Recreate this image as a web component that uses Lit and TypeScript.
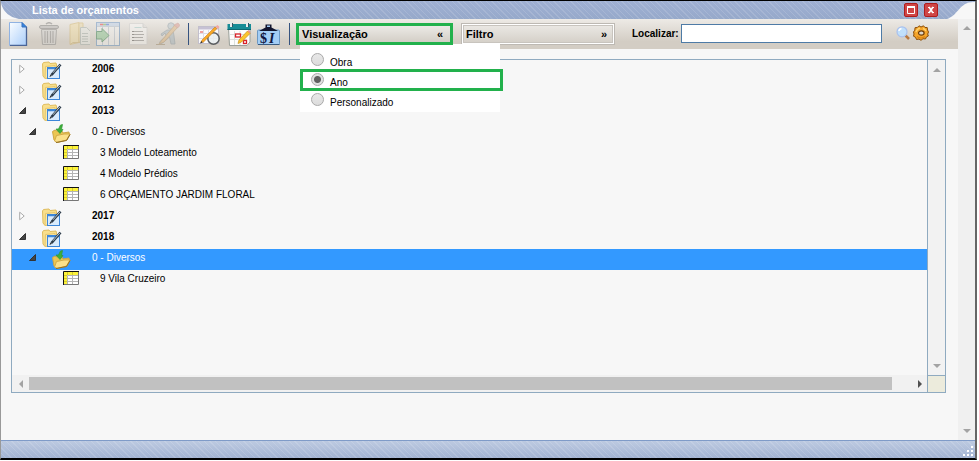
import { LitElement, html, svg, css, nothing, TemplateResult } from "lit";
import { customElement, state } from "lit/decorators.js";
import { classMap } from "lit/directives/class-map.js";

interface TreeRow {
  level: 0 | 1 | 2;
  label: string;
  open?: boolean;
  selected?: boolean;
}

const ROWS: TreeRow[] = [
  { level: 0, label: "2006", open: false },
  { level: 0, label: "2012", open: false },
  { level: 0, label: "2013", open: true },
  { level: 1, label: "0 - Diversos", open: true },
  { level: 2, label: "3 Modelo Loteamento" },
  { level: 2, label: "4 Modelo Prédios" },
  { level: 2, label: "6 ORÇAMENTO JARDIM FLORAL" },
  { level: 0, label: "2017", open: false },
  { level: 0, label: "2018", open: true },
  { level: 1, label: "0 - Diversos", open: true, selected: true },
  { level: 2, label: "9 Vila Cruzeiro" },
];

const icon = (w: number, h: number, body: unknown) =>
  html`<svg width=${w} height=${h} viewBox="0 0 ${w} ${h}" aria-hidden="true">${body}</svg>`;

const newPage = icon(24, 24, svg`
  <defs><linearGradient id="np" x1="0" y1="0" x2="1" y2="1">
    <stop offset="0" stop-color="#fafdff"/><stop offset="1" stop-color="#a9cdfa"/></linearGradient></defs>
  <path d="M3.500.5H16l4.500 4.500V23.500H3.500Z" fill="url(#np)" stroke="#8fb2e2"/>
  <path d="M4 23.500H20.500V5" fill="none" stroke="#4a6496" stroke-width="1.300"/>
  <path d="M16 .5V5h4.500Z" fill="#2f86e8" stroke="#3a70b8"/>`);

const trash = icon(24, 24, svg`
  <path d="M10 2q3-2.500 6 0" fill="none" stroke="#666" stroke-width="1.500"/>
  <rect x="3.500" y="3.500" width="19" height="3" rx="1.500" fill="#aaa" stroke="#666"/>
  <path d="M5.500 7.500H20.500L19.500 22.500H6.500Z" fill="#d0d0d0" stroke="#777"/>
  <path d="M9 9v12M11.500 9v12M14.500 9v12M17 9v12" stroke="#777" stroke-width="1.200"/>`);

const copyFolder = icon(24, 24, svg`
  <path d="M4 2.500 13 .5V20.500L4 22.500Z" fill="#f4dc98" stroke="#d0ae58"/>
  <path d="M13 1h4v19h-4Z" fill="#eedaa0" stroke="#d0ae58"/>
  <path d="M14.500 5.500h6l4 4v13h-10Z" fill="#e8ece6" stroke="#98a6a0"/>
  <path d="M16 11.500h6M16 14.500h6M16 17h6M16 19.500h6" stroke="#98a6a0"/>
  <path d="m4 22.500 3-2h7" fill="none" stroke="#c8a550"/>`);

const importWindow = icon(24, 24, svg`
  <rect x=".5" y=".5" width="23" height="23" fill="#f8f8f8" stroke="#4a80bc"/>
  <path d="M1 1h22v3H1Z" fill="#b4cdee"/>
  <path d="M4 2.500h3" stroke="#e11" stroke-width="1.500"/><path d="M7 2.500h3" stroke="#6a3" stroke-width="1.500"/>
  <path d="M10 2.500h3" stroke="#25c" stroke-width="1.500"/>
  <path d="M1 4.500h22M6.500 5v18M12.500 5v18M18.500 5v18" stroke="#a9b9cb" fill="none"/>
  <path d="M.5 9.500H6V6.500L13 13.500 6 20V17H.5Z" fill="#7cc487" stroke="#146a30"/>`);

const listPage = icon(24, 24, svg`
  <path d="M3.500 1.500H17l4 4V22.500H3.500Z" fill="#fff" stroke="#ccc"/>
  <path d="M17 1.500v4h4" fill="#ddd" stroke="#bbb"/>
  <path d="M6 9.500h2M6 12.500h2M6 15.500h2M6 18.500h2" stroke="#333"/>
  <path d="M8.500 5.500h7" stroke="#9cc"/>
  <path d="M8 9.500h9M8 12.500h10M8 15.500h9M8 18.500h10" stroke="#777"/>`);

const worker = icon(24, 24, svg`
  <circle cx="15" cy="4" r="3.200" fill="#b0c2cc" stroke="#7f929e"/>
  <path d="M11 8h6l1 6 1 8h-4l-1.500-7L9 19l-4 3-1.500-2L10 14l-1-3-3 3-1-2Z" fill="#9db0bb" stroke="#70838f" stroke-width=".8"/>
  <path d="m3 22 3-4L19 3l3 2L8 20Z" fill="#e0b070" stroke="#a88048" stroke-width=".8"/>
  <path d="m18 3 4-2 2 2.500-2.500 2.500Z" fill="#dc8c80" stroke="#b0685c" stroke-width=".6"/>
  <path d="M0 22.500h9" stroke="#8f7a58"/>`);

const calendarClock = icon(24, 24, svg`
  <rect x="1.500" y="4.500" width="20" height="17" fill="#fbfbfd" stroke="#c2bfcc"/>
  <path d="M2 5h19v2.500H2Z" fill="#c6c1d4"/>
  <path d="M2 11.500h19M2 16.500h19M6.500 8v13M11.500 8v13M16.500 8v13" stroke="#dedce6"/>
  <path d="M3 9h3v2H3Z" fill="#f0a0a0"/>
  <circle cx="16.500" cy="16.500" r="5.700" fill="#e9edee" fill-opacity=".85" stroke="#5a5d5f" stroke-width="1.500"/>
  <path d="m4 20.500 1-2.500L18 5l1.800 1.800L6.500 20Z" fill="#f9a824" stroke="#c47e20" stroke-width=".6"/>
  <path d="m18.500 4.500 2-1.500 2 2-1.500 2Z" fill="#f4a8a0"/><path d="m3 21.500 1.300-2.500 1.400 1.400Z" fill="#333"/>`);

const calendarEdit = icon(24, 24, svg`
  <path d="M1.500 6 2.500 23.500H20L23 20V6Z" fill="#fdfdfd" stroke="#9aa09a"/>
  <path d="M.5 2h23.500v6H.5Z" fill="#178c96"/><path d="M.5 7.500H24" stroke="#0e6871"/>
  <path d="M4 0v5M20 0v5" stroke="#e8eeee" stroke-width="2"/><path d="M5.500 1v4M21.500 1v4" stroke="#356"/>
  <path d="M3 12.500h18M3 17.500h17M7.500 9v14M13 9v14" stroke="#dbe0dc"/>
  <rect x="8.500" y="12" width="5" height="3" fill="#fff" stroke="#d8232a" stroke-width="1.300"/>
  <rect x="16.500" y="18.500" width="3" height="3" fill="#fff" stroke="#d8232a" stroke-width="1.300"/>
  <path d="m11 21.500 1-3.500L20.500 9l2.500 2.500-8.500 8.500Z" fill="#fcc52c" stroke="#c98f18" stroke-width=".7"/>
  <path d="m20.500 9 1-1 2 2-.5 1.500Z" fill="#ef8d86"/>`);

const priceBox = icon(24, 24, svg`
  <rect x=".5" y="8" width="22" height="14.500" rx="1" fill="#a3cdf5" stroke="#6c98c4"/>
  <path d="M1 22.500h21.500" stroke="#385a80"/>
  <path d="M8.500 5.500V2.500h6V5.500L21 9H2Z" fill="#12152e"/><rect x="10" y="3.500" width="3" height="1.500" fill="#a3cdf5"/>
  <text class="price" x="3" y="21">$</text><text class="price slant" x="12" y="21">I</text>`);

const maximize = icon(14, 14, svg`
  <rect x=".5" y=".5" width="13" height="13" rx="1.500" fill="#cf4646" stroke="#b01c1c"/>
  <path d="M3 3.500h8M3.500 5v5.500h7V5" fill="none" stroke="#fff"/><path d="M3 4.500h8" stroke="#fff"/>`);

const close = icon(14, 14, svg`
  <rect x=".5" y=".5" width="13" height="13" rx="1.500" fill="#cf4646" stroke="#b01c1c"/>
  <path d="m5 4 4 6M9 4l-4 6" stroke="#fff" stroke-width="1.600"/><path d="M4 4.500h2M8 4.500h2M4 9.500h2M8 9.500h2" stroke="#fff"/>`);

const search = icon(14, 14, svg`
  <path d="m9.500 9.500 3.500 3.500" stroke="#b9793e" stroke-width="2.500"/>
  <circle cx="6" cy="5.800" r="5" fill="#c1e0fb" stroke="#a9c1ee" stroke-width="1.200"/>
  <path d="M3 5q0-2 2.500-2.500" fill="none" stroke="#fff" stroke-width="1.500"/>`);

const gear = icon(16, 16, svg`
  <path d="M6 .8 8 2l2.500-1.200L12 2.500h2.200l.3 2.500L15.500 7l-.8 2 .6 2-2 1-.8 2-2.500-.3L8 15.300l-2-1.200-2.500.4-1-2.300-2-1L1 9 .5 7l1.300-1.800.2-2.500L4.300 2.500Z"
    fill="#f5a52a" stroke="#8a4e0c"/>
  <path d="M3 7q.8-3 4-3.800M10 3.500q2 .5 3 2.500" fill="none" stroke="#ffd36e" stroke-width="1.300"/>
  <path d="M4 11.500q4 3 8 0" fill="none" stroke="#d98212" stroke-width="1.200"/>
  <ellipse cx="8.300" cy="8" rx="2.800" ry="2.200" fill="#ded6c8" stroke="#6e3c06" stroke-width="1.200"/>`);

const folderEdit = icon(20, 18, svg`
  <path d="M.5 3 1.500 1.500 7 1l1 1.500 6-.5.500 2V16L3 17.500 1 15Z" fill="#f8df8c" stroke="#dfbd60"/>
  <path d="M3.500 5.500 13 4.500V15L3 17.500Z" fill="#fbe9a8" stroke="#e4c670"/>
  <rect x="5.500" y="6.500" width="12" height="11" fill="#d9ebfc" stroke="#3c86d8"/>
  <path d="M6 7.500h11" stroke="#3c86d8" stroke-width="1.500"/>
  <path d="M9.500 14 18.500 3.500" stroke="#2b3a48" stroke-width="2.600"/><path d="m11 11.800 7-8" stroke="#b4c4ce"/>
  <path d="m7.500 16 1-2.500 1.500 1.200Z" fill="#222"/>`);

const folderOpen = icon(20, 19, svg`
  <path d="M2 16 .5 7.500 3 6l2 1h5l1 2 6-1v2l1 0-3 6L5 18.500Z" fill="#ecc652" stroke="#cfa645"/>
  <path d="m2.500 17 2-5.500L12 10l6 0-3.500 6-9.500 2.500Z" fill="#fbe08a" stroke="#d2aa48"/>
  <path d="M4 18.500 14.500 16.500l3.500-6" fill="none" stroke="#8d6d28"/>
  <path d="M10.500.5 8.500 1 6.500 5H4l4 4.500L11 5.500H9.500Z" fill="#3fae3a" stroke="#2f9a34" stroke-width=".7"/>`);

const sheet = icon(17, 14, svg`
  <rect x="1.500" y=".5" width="15" height="13" fill="#fff"/>
  <path d="M2 1h14v3H2ZM2 1h3v12H2Z" fill="#fdf33a"/>
  <path d="M5.500 4.500H16M5.500 7.500H16M5.500 10.500H16M10.500 4.500V13M5.500 4.500V13" fill="none" stroke="#b4b4b4"/>
  <path d="M2 4.500h3M2 7.500h3M2 10.500h3M10.500 1v3M5.500 1v3" stroke="#d4ca30"/>
  <path d="M16.500 1v12.500H2" fill="none" stroke="#777"/>
  <path d="M1.500 14V.5H17" fill="none" stroke="#111"/>`);

const arrowClosed = icon(6, 10, svg`<path d="M.7 1.200v7.600L5.200 5Z" fill="#fff" stroke="#a9a9a9"/>`);
const arrowOpen = icon(7, 7, svg`<path d="M6.500.5v6H.5Z" fill="#444" stroke="#333" stroke-linejoin="round"/>`);

const triUp = icon(8, 4, svg`<path d="M0 4 4 0l4 4Z" fill="currentColor"/>`);
const triDown = icon(8, 4, svg`<path d="M0 0h8L4 4Z" fill="currentColor"/>`);
const triLeft = icon(4, 8, svg`<path d="M4 0v8L0 4Z" fill="currentColor"/>`);
const triRight = icon(4, 8, svg`<path d="M0 0v8l4-4Z" fill="currentColor"/>`);

const cornerLeft = icon(18, 18, svg`<path d="M0 2Q3 15 18 18H0Z" fill="#f7f7f7"/>`);
const cornerRight = icon(28, 18, svg`<path d="M0 18C12 14 12 1 27 1H28V18Z" fill="#f7f7f7"/>`);
const grip = icon(12, 12, svg`<path d="M8 0h2v2H8ZM4 4h2v2H4ZM8 4h2v2H8ZM0 8h2v2H0ZM4 8h2v2H4ZM8 8h2v2H8Z" fill="#fff"/>`);

const TOOLS_EDIT: { name: string; art: TemplateResult; off?: boolean }[] = [
  { name: "Novo", art: newPage },
  { name: "Excluir", art: trash, off: true },
  { name: "Copiar", art: copyFolder, off: true },
  { name: "Importar", art: importWindow, off: true },
  { name: "Detalhes", art: listPage, off: true },
  { name: "Recursos", art: worker, off: true },
];

const TOOLS_PLAN = [
  { name: "Cronograma", art: calendarClock },
  { name: "Planejamento", art: calendarEdit },
  { name: "Preços", art: priceBox },
];

@customElement("budget-tree")
export class BudgetTree extends LitElement {
  static styles = css`
    :host {
      display: grid;
      grid-template: minmax(0, 1fr) 17px / minmax(0, 1fr) 18px;
      border: 1px solid #8faac0;
      box-sizing: border-box;
      font: 10px/18px "Liberation Sans", Arial, sans-serif;
      color: #000;
    }
    svg { display: block; }
    .rows { margin: 0; padding: 0; list-style: none; overflow: hidden; }
    .row { display: grid; grid-template-columns: 80px 1fr; height: 21px; }
    .lead { display: grid; grid-template-columns: 20px 20px; column-gap: 10px; align-items: start; }
    .level1 .lead { padding-left: 10px; }
    .level2 .lead { padding-left: 20px; }
    .level0 { font-weight: bold; }
    .level2 { grid-template-columns: 88px 1fr; }
    .selected { background: #3399ff; color: #fff; }
    .toggle { border: 0; padding: 0; background: none; height: 17px; display: grid; place-items: center; }
    .art { padding-top: 1px; }
    .vbar { border-left: 1px solid #8faac0; display: flex; flex-direction: column; justify-content: space-between;
      align-items: center; padding: 8px 0 7px; color: #a3a3a3; background: #f2f2f2; }
    .hbar { display: grid; grid-template-columns: 17px 1fr 35px; align-items: center; background: #f1f1f1; color: #a3a3a3; }
    .left { justify-self: center; }
    .right { justify-self: end; padding-right: 5px; color: #505050; }
    .thumb { height: 13px; background: #c1c1c1; }
    .corner { background: #ecebdc; border: solid #8faac0; border-width: 1px 0 0 1px; }
  `;

  render() {
    return html`
      <ul class="rows" role="tree" aria-label="Orçamentos">
        ${ROWS.map((r) => html`
          <li role="treeitem" aria-selected=${r.selected ? "true" : "false"}
            class=${classMap({ row: true, ["level" + r.level]: true, selected: !!r.selected })}>
            <span class="lead">
              ${r.open === undefined
                ? html`<span></span>`
                : html`<button class="toggle" aria-label=${r.open ? "Recolher" : "Expandir"}>${r.open ? arrowOpen : arrowClosed}</button>`}
              <span class="art">${[folderEdit, folderOpen, sheet][r.level]}</span>
            </span>
            <span>${r.label}</span>
          </li>`)}
      </ul>
      <div class="vbar">${triUp}${triDown}</div>
      <div class="hbar">
        <span class="left">${triLeft}</span><span class="thumb"></span><span class="right">${triRight}</span>
      </div>
      <div class="corner"></div>
    `;
  }
}

@customElement("app-root")
export class AppRoot extends LitElement {
  @state() private menuOpen = true;
  @state() private view = "Ano";

  static styles = css`
    :host { display: block; background: #fff; font-family: "Liberation Sans", Arial, sans-serif; }
    * { box-sizing: border-box; }
    svg { display: block; }
    button { font-family: inherit; color: inherit; }
    .window { display: flex; flex-direction: column; height: calc(100vh - 1px); min-height: 400px; margin-right: 2px;
      border: solid; border-width: 1px 2px 2px 1px; border-color: #000 #666 #000 #999; background: #f7f7f7; }
    .title { display: flex; height: 18px;
      background: repeating-linear-gradient(45deg, #ffffff00 0 3px, #ffffff20 3px 4px), linear-gradient(#9fb0d3, #96a9ca); }
    .name { flex: 1; margin: 0; padding-left: 13px; font-size: 11px; line-height: 19px; color: #fff; }
    .controls { display: flex; align-items: center; gap: 6px; padding-right: 9px; }
    .plain { border: 0; padding: 0; background: none; display: grid; place-items: center; }
    .body { flex: 1; display: grid; grid-template-columns: minmax(0, 1fr) 17px; min-height: 0; }
    .main { display: flex; flex-direction: column; min-height: 0; }
    .toolbar { display: flex; height: 30px; padding-left: 2px; align-items: flex-start; background: linear-gradient(#edeae6, #d3cdc4 75%); }
    .tool { width: 30px; height: 24px; margin-top: 3px; }
    .tool:disabled { opacity: 0.4; }
    .sep { width: 1px; height: 22px; margin: 4px 5px; background: #36537f; }
    .price { font: bold 14px "Liberation Serif", serif; fill: #10173f; }
    .slant { font-style: italic; }
    .picker { position: relative; margin: 4px 8px 0 1px; width: 157px; }
    .drop { display: flex; justify-content: space-between; align-items: center; width: 100%; height: 22px; padding: 0 7px 0 3px;
      font-size: 11px; font-weight: bold; border: 3px solid #22b14c; background: linear-gradient(#eceae6, #d3cec6); color: #000; }
    .chosen { position: relative; z-index: 2; }
    .filter { width: 154px; margin-top: 4px; padding: 0 7px 0 4px; border: 1px solid #bdb9b3;
      box-shadow: inset 0 0 0 1px #fff, inset 0 0 0 2px #c8c4be; }
    .menu { position: absolute; z-index: 1; left: 4px; top: 21px; width: 200px; margin: 0; padding: 5px 0 3px; border: 0; background: #fff; }
    .option { position: relative; display: flex; height: 20px; padding-left: 11px; gap: 6px; align-items: center; font-size: 10px; }
    .option span { padding-top: 7px; line-height: 14px; }
    .picked::after { content: ""; position: absolute; inset: 0 -3px -2px 0; border: 3px solid #22b14c; pointer-events: none; }
    .radio { appearance: none; width: 13px; height: 13px; margin: 0; border: 1px solid #a9a9a9; border-radius: 50%;
      background: linear-gradient(#e8e8e8, #dcdcdc); }
    .radio:checked { background: radial-gradient(circle, #606060 0 3px, #e0e0e0 4px); }
    .find { display: flex; align-items: center; gap: 2px; margin: 5px 0 0 17px; font-size: 10px; font-weight: bold; }
    .query { width: 201px; height: 19px; border: 1px solid #4e7ba6; background: #fff; padding: 0 3px; font: inherit; }
    .actions { display: flex; gap: 3px; margin: 6px 0 0 14px; }
    .tree { flex: 1; margin: 10px 12px 47px 10px; min-height: 0; }
    .scroll { display: flex; flex-direction: column; justify-content: space-between; align-items: center; padding: 7px 0;
      background: #f0f0f0; color: #a3a3a3; }
    .status { display: flex; justify-content: flex-end; align-items: flex-end; height: 18px; border-top: 1px solid #7f9bc8;
      background: repeating-linear-gradient(45deg, #ffffff00 0 3px, #ffffff20 3px 4px), linear-gradient(#bdcae1, #a2b3d2); }
  `;

  render() {
    const views = ["Obra", "Ano", "Personalizado"];
    return html`
      <div class="window">
        <header class="title">
          ${cornerLeft}
          <h1 class="name">Lista de orçamentos</h1>
          <div class="controls">
            <button class="plain" aria-label="Maximizar">${maximize}</button>
            <button class="plain" aria-label="Fechar">${close}</button>
          </div>
          ${cornerRight}
        </header>
        <div class="body">
          <main class="main">
            <div class="toolbar">
              ${TOOLS_EDIT.map((t) => html`<button class="plain tool" aria-label=${t.name} ?disabled=${t.off}>${t.art}</button>`)}
              <span class="sep"></span>
              ${TOOLS_PLAN.map((t) => html`<button class="plain tool" aria-label=${t.name}>${t.art}</button>`)}
              <span class="sep"></span>
              <div class="picker">
                <button class="drop chosen" aria-expanded=${this.menuOpen ? "true" : "false"}
                  @click=${() => (this.menuOpen = !this.menuOpen)}><span>Visualização</span><span>«</span></button>
                ${this.menuOpen ? html`
                  <fieldset class="menu" aria-label="Visualização">
                    ${views.map((v) => html`
                      <label class=${classMap({ option: true, picked: v === this.view })}>
                        <input class="radio" type="radio" name="view" .checked=${v === this.view} @change=${() => (this.view = v)} />
                        <span>${v}</span>
                      </label>`)}
                  </fieldset>` : nothing}
              </div>
              <button class="drop filter"><span>Filtro</span><span>»</span></button>
              <div class="find">
                <label for="query">Localizar:</label>
                <input id="query" class="query" type="text" />
              </div>
              <div class="actions">
                <button class="plain" aria-label="Pesquisar">${search}</button>
                <button class="plain" aria-label="Configurar">${gear}</button>
              </div>
            </div>
            <budget-tree class="tree"></budget-tree>
          </main>
          <div class="scroll">${triUp}${triDown}</div>
        </div>
        <footer class="status">${grip}</footer>
      </div>
    `;
  }
}
